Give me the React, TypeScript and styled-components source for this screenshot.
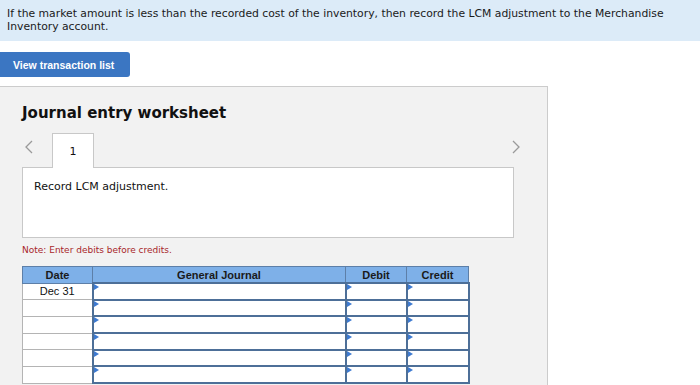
import React from "react";
import styled, { createGlobalStyle } from "styled-components";

const Global = createGlobalStyle`
  html, body { margin: 0; padding: 0; background: #ffffff; }
  body { font-family: "DejaVu Sans", Verdana, sans-serif; color: #111; }
`;

const Page = styled.div`
  height: 385px;
  overflow: hidden;
`;

const Banner = styled.div`
  background: #dcebf8;
  padding: 7px 7px 7px 7px;
  height: 27px;
  font-size: 10.8px;
  line-height: 13px;
  color: #1a1a1a;
`;

const ButtonRow = styled.div`
  padding-top: 11px;
`;

const Button = styled.button`
  width: 130px;
  height: 25px;
  border: none;
  border-radius: 0 3px 3px 0;
  background: #3b76c2;
  color: #fff;
  font-family: "Liberation Sans", Arial, sans-serif;
  font-weight: bold;
  font-size: 10.5px;
  padding: 0 0 0 13px;
  text-align: left;
  display: block;
`;

const Panel = styled.div`
  margin-top: 9px;
  width: 525px;
  height: 320px;
  border: 1px solid #cccccc;
  border-left: none;
  background: #f2f2f2;
  padding: 0 0 0 22px;
`;

const Title = styled.h2`
  margin: 0;
  padding-top: 16px;
  height: 22px;
  font-family: "DejaVu Sans", Verdana, sans-serif;
  font-weight: bold;
  font-size: 15px;
  line-height: 20px;
  color: #111;
`;

const TabRow = styled.div`
  display: flex;
  align-items: flex-end;
  width: 500px;
  margin-top: 7px;
  height: 35px;
`;

const Chevron = styled.div<{ $right?: boolean }>`
  width: 30px;
  height: 30px;
  box-sizing: border-box;
  display: flex;
  align-items: center;
  justify-content: ${(p) => (p.$right ? "flex-end" : "flex-start")};
  padding-left: ${(p) => (p.$right ? "0" : "3px")};
  padding-right: ${(p) => (p.$right ? "2px" : "0")};
  margin-left: ${(p) => (p.$right ? "auto" : "0")};
  align-self: flex-start;
  svg { display: block; }
`;

const Tab = styled.div`
  width: 42px;
  height: 35px;
  box-sizing: border-box;
  border: 1px solid #c8c8c8;
  border-bottom: none;
  background: #fff;
  display: flex;
  align-items: center;
  justify-content: center;
  font-size: 11px;
  margin-bottom: -1px;
  position: relative;
  z-index: 1;
`;

const ContentBox = styled.div`
  width: 492px;
  height: 71px;
  box-sizing: border-box;
  border: 1px solid #c8c8c8;
  background: #fff;
  padding: 12px 11px;
  font-size: 11px;
  line-height: 14px;
`;

const Note = styled.div`
  margin-top: 6px;
  font-size: 9px;
  line-height: 12px;
  color: #a8262a;
`;

const Table = styled.table`
  margin-top: 10px;
  border-collapse: collapse;
  font-family: "Liberation Sans", Arial, sans-serif;
  font-size: 11px;
  table-layout: fixed;
`;

const Th = styled.th<{ $w: number }>`
  width: ${(p) => p.$w}px;
  height: 15px;
  padding: 0;
  background: #7eb0e8;
  border: 1px solid #5d7fa8;
  font-weight: bold;
  color: #1a1a1a;
  text-align: center;
  line-height: 14px;
`;

const DateCell = styled.td`
  height: 14.7px;
  padding: 0;
  background: #fff;
  border: 1px solid #b4b4b4;
  text-align: center;
  color: #111;
  line-height: 14px;
`;

const InputCell = styled.td`
  height: 14.7px;
  padding: 0;
  background: #fff;
  border: 2px solid #4d6f98;
  position: relative;
`;

const Marker = styled.span`
  position: absolute;
  left: 0;
  top: 0;
  width: 0;
  height: 0;
  border-top: 3px solid transparent;
  border-bottom: 3px solid transparent;
  border-left: 5px solid #3d7ad1;
`;

const rows = ["Dec 31", "", "", "", "", ""];

export default function App() {
  return (
    <Page>
      <Global />
      <Banner>
        If the market amount is less than the recorded cost of the inventory, then record the LCM adjustment to the Merchandise Inventory account.
      </Banner>
      <ButtonRow>
        <Button>View transaction list</Button>
      </ButtonRow>
      <Panel>
        <Title>Journal entry worksheet</Title>
        <TabRow>
          <Chevron>
            <svg width="8" height="14" viewBox="0 0 8 14">
              <path d="M7 1 L1 7 L7 13" fill="none" stroke="#9a9a9a" strokeWidth="1.3" />
            </svg>
          </Chevron>
          <Tab>1</Tab>
          <Chevron $right>
            <svg width="8" height="14" viewBox="0 0 8 14">
              <path d="M1 1 L7 7 L1 13" fill="none" stroke="#9a9a9a" strokeWidth="1.3" />
            </svg>
          </Chevron>
        </TabRow>
        <ContentBox>Record LCM adjustment.</ContentBox>
        <Note>Note: Enter debits before credits.</Note>
        <Table>
          <thead>
            <tr>
              <Th $w={69}>Date</Th>
              <Th $w={252}>General Journal</Th>
              <Th $w={60}>Debit</Th>
              <Th $w={61}>Credit</Th>
            </tr>
          </thead>
          <tbody>
            {rows.map((d, i) => (
              <tr key={i}>
                <DateCell>{d}</DateCell>
                <InputCell><Marker /></InputCell>
                <InputCell><Marker /></InputCell>
                <InputCell><Marker /></InputCell>
              </tr>
            ))}
          </tbody>
        </Table>
      </Panel>
    </Page>
  );
}
